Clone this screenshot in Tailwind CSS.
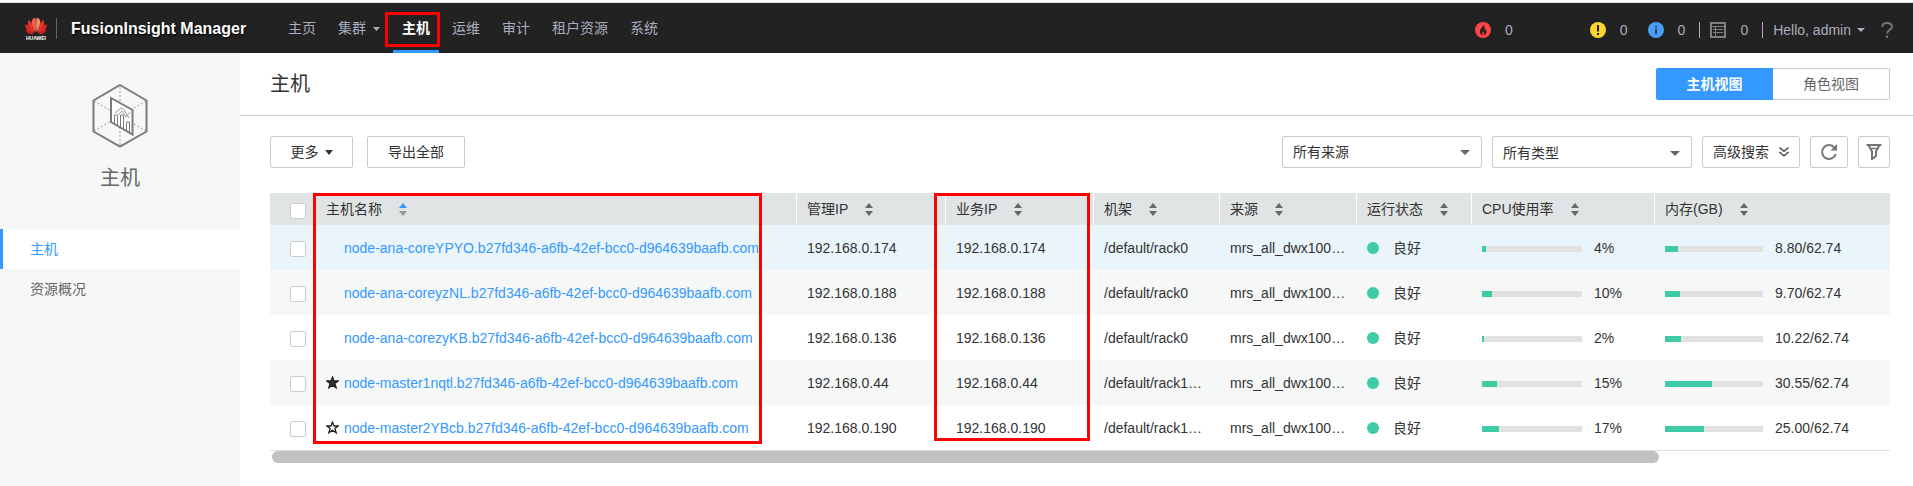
<!DOCTYPE html>
<html lang="zh-CN">
<head>
<meta charset="utf-8">
<title>FusionInsight Manager</title>
<script src="https://cdn.jsdelivr.net/npm/@tailwindcss/browser@4"></script>
</head>
<body class="flex min-h-screen flex-col bg-white pt-0.5 font-['Liberation_Sans','Noto_Sans_CJK_SC',sans-serif] text-sm leading-5 text-[#333333]">

<svg class="hidden">
  <symbol id="sort" viewBox="0 0 8 13"><path d="M4 0l4 5H0z"/><path d="M4 13l4-5H0z"/></symbol>
</svg>

<header class="flex h-[51px] shrink-0 items-start border-t border-[#dddddd] bg-[#222222] text-[#a9adbf]">
  <a href="#" class="flex items-center pt-[15px] pl-[25px]" aria-label="Huawei">
    <svg width="22" height="22" viewBox="0 0 44 44">
      <path fill="#f0664a" d="M21 28C14 20 11 9 15 3c1-2 3-3 6-3 1 9 1 19 0 28z"/>
      <path fill="#f58a66" d="M23 28c7-8 10-19 6-25-1-2-3-3-6-3-1 9-1 19 0 28z"/>
      <path fill="#e2362c" d="M19 29C9 23 3 14 7 4c6 4 11 13 12 25z"/>
      <path fill="#e2362c" d="M25 29c10-6 16-15 12-25-6 4-11 13-12 25z"/>
      <path fill="#d92b26" d="M18 30C7 29-1 22 1 12c8 3 13 9 17 18z"/>
      <path fill="#d92b26" d="M26 30c11-1 19-8 17-18-8 3-13 9-17 18z"/>
      <path fill="#cc1f1f" d="M17 32C10 34 4 31 1 23c7 1 12 4 16 9z"/>
      <path fill="#cc1f1f" d="M27 32c7 2 13-1 16-9-7 1-12 4-16 9z"/>
      <text x="22" y="44" text-anchor="middle" font-family="Liberation Sans" font-weight="bold" font-size="10" fill="#ffffff">HUAWEI</text>
    </svg>
  </a>
  <div class="mt-[15px] ml-[9px] h-[21px] w-px bg-[#666666]"></div>
  <div class="mt-3.5 ml-3.5 w-[208px] text-base leading-6 font-bold whitespace-nowrap text-white [text-shadow:1px_1px_2px_#000000]">FusionInsight Manager</div>
  <nav class="flex h-[50px] gap-1 whitespace-nowrap">
    <a href="#" class="px-[9px] pt-[15px]">主页</a>
    <a href="#" class="flex items-start gap-[7px] px-[9px] pt-[15px]">集群<svg class="mt-[9px]" width="7" height="4" viewBox="0 0 7 4" fill="currentColor"><path d="M0 0h7L3.500 4z"/></svg></a>
    <a href="#" class="relative border-b-3 border-[#3398ff] px-[9px] pt-[15px] font-bold text-white">主机<span class="absolute top-[9px] -left-2 h-[35px] w-[55px] border-3 border-[#ff0000]"></span></a>
    <a href="#" class="px-[9px] pt-[15px]">运维</a>
    <a href="#" class="px-[9px] pt-[15px]">审计</a>
    <a href="#" class="px-[9px] pt-[15px]">租户资源</a>
    <a href="#" class="px-[9px] pt-[15px]">系统</a>
  </nav>
  <div class="mt-[17px] mr-5 ml-auto flex items-center whitespace-nowrap">
    <svg width="16" height="16" viewBox="0 0 16 16"><circle cx="8" cy="8" r="8" fill="#ff4444"/><path d="M8.500 2.500c.5 2-3.500 3.500-3.500 7 0 2 1.200 3.500 2.700 4-.8-1.500-.4-2.800.6-4.200.3 1.200 1 1.700.6 3.900 2.500-1 3.300-3.700 2-6.200-.3.900-.7 1.300-1.200 1.500.4-2.500-.2-4.800-1.200-6z" fill="#222222"/></svg>
    <span class="ml-3.5">0</span>
    <svg class="ml-[77px]" width="16" height="16" viewBox="0 0 16 16"><circle cx="8" cy="8" r="8" fill="#fdd52b"/><path d="M7 3h2v6.500H7zM7 11h2v2H7z" fill="#222222"/></svg>
    <span class="ml-3.5">0</span>
    <svg class="ml-5" width="16" height="16" viewBox="0 0 16 16"><circle cx="8" cy="8" r="8" fill="#4a9cf5"/><path d="M7.300 4h1.400v1.500H7.300zM7.300 6.500h1.400V12H7.300z" fill="#222222"/></svg>
    <span class="ml-3.5">0</span>
    <span class="ml-3.5 h-4 w-px bg-[#a9adbf]"></span>
    <svg class="ml-2.5" width="16" height="16" viewBox="0 0 16 16" fill="none" stroke="#808080"><path stroke-width="2" d="M1 1h14v14H1z"/><path d="M1 4.500h14M3 7.500h10M3 10.500h10M5.500 4.500V14"/></svg>
    <span class="ml-3.5">0</span>
    <span class="ml-3.5 h-4 w-px bg-[#a9adbf]"></span>
    <a href="#" class="ml-2.5 flex items-center gap-1.5">Hello, admin<svg width="8" height="4" viewBox="0 0 8 4" fill="currentColor"><path d="M0 0h8L4 4z"/></svg></a>
    <a href="#" class="ml-4" aria-label="帮助"><svg width="12" height="16" viewBox="0 0 12 16" fill="none" stroke="#757575" stroke-width="2"><path d="M1.200 5C1 2.500 3 1 6 1s5 1.500 5 3.700c0 3-5 3.300-5 6.800"/><path d="M6 13.500V16"/></svg></a>
  </div>
</header>

<div class="flex grow">
  <aside class="w-60 shrink-0 bg-[#f6f8f8] text-[#666666]">
    <div class="flex h-44 flex-col items-center pt-[31px]">
      <svg width="56" height="64" viewBox="0 0 56 64" fill="none" stroke="#7a7a7a">
        <path stroke-width="2" d="M28 1l26.500 15.500v31L28 62.500 1.500 47.500v-31z"/>
        <path stroke="#999999" stroke-dasharray="2 2" d="M28 3v60M2 17l26 15M54 17L28 32M2 47l26-15M54 47L28 32"/>
        <path stroke-width="2" fill="#ffffff" d="M19 14l21.500 12v24.500L19 38z"/>
        <path d="M22.500 39v-8h3v10M28.500 43V31h3v14M34.500 47v-9h3v11"/>
        <path stroke="#999999" d="M23 29l6-5 3 2 5 8M25 32l5-5 4 6 4-5"/>
      </svg>
      <div class="mt-4 text-xl leading-7">主机</div>
    </div>
    <nav>
      <a href="#" class="block border-l-3 border-[#3398ff] bg-white py-2.5 pl-[27px] text-[#3398ff]">主机</a>
      <a href="#" class="block border-l-3 border-transparent py-2.5 pl-[27px]">资源概况</a>
    </nav>
  </aside>

  <main class="min-w-0 grow">
    <div class="flex h-[63px] items-center justify-between border-b border-[#cccccc] pr-[23px] pl-[30px]">
      <h1 class="text-xl leading-7">主机</h1>
      <div class="flex h-8">
        <button class="w-[117px] rounded-l-xs bg-[#3398ff] font-bold text-white">主机视图</button>
        <button class="w-[117px] rounded-r-xs border border-l-0 border-[#cccccc] text-[#666666]">角色视图</button>
      </div>
    </div>

    <div class="flex h-[52px] items-end pr-[23px] pl-[30px] whitespace-nowrap">
      <button class="flex h-8 w-[83px] items-center justify-center gap-1.5 rounded-xs border border-[#cccccc]">更多<svg width="8" height="5" viewBox="0 0 8 5" fill="#333333"><path d="M0 0h8L4 5z"/></svg></button>
      <button class="ml-3.5 h-8 w-[98px] rounded-xs border border-[#cccccc]">导出全部</button>
      <div class="ml-auto flex gap-2.5">
        <div class="relative">
          <select aria-label="来源" class="h-8 w-[200px] appearance-none rounded-xs border border-[#cccccc] pl-2.5"><option>所有来源</option></select>
          <svg class="pointer-events-none absolute top-3.5 right-3" width="10" height="5" viewBox="0 0 10 5" fill="#666666"><path d="M0 0h10L5 5z"/></svg>
        </div>
        <div class="relative">
          <select aria-label="类型" class="h-8 w-[200px] appearance-none rounded-xs border border-[#cccccc] pt-0.5 pl-2.5"><option>所有类型</option></select>
          <svg class="pointer-events-none absolute top-[15px] right-3" width="10" height="5" viewBox="0 0 10 5" fill="#666666"><path d="M0 0h10L5 5z"/></svg>
        </div>
        <button class="flex h-8 w-[98px] items-center justify-center gap-2.5 rounded-xs border border-[#cccccc]">高级搜索<svg width="10" height="10" viewBox="0 0 10 10" fill="none" stroke="#333333" stroke-width="1.200"><path d="M.5.5L5 4.500 9.500.5M.5 5L5 9l4.500-4"/></svg></button>
        <button aria-label="刷新" class="flex h-8 w-[38px] items-center justify-center rounded-xs border border-[#cccccc]"><svg width="18" height="18" viewBox="0 0 18 18" fill="none" stroke="#737373" stroke-width="2"><path d="M14.500 4.500A7 7 0 1 0 15.800 11"/><path fill="#737373" stroke="none" d="M17 1v6.500h-6.500z"/></svg></button>
        <button aria-label="筛选" class="flex h-8 w-8 items-center justify-center rounded-xs border border-[#cccccc]"><svg width="16" height="16" viewBox="0 0 16 16" fill="none" stroke="#737373" stroke-width="2"><path d="M.5 1h15M2.500 1l3.500 6.500V15l4-3V7.500L13.500 1"/><path stroke-width="1.500" d="M4 4.500h8"/></svg></button>
      </div>
    </div>

    <div class="relative mt-[25px] mr-[23px] ml-[30px]">
      <div class="border-b border-[#dddddd]">
        <table class="w-full table-fixed border-separate border-spacing-0 text-left whitespace-nowrap">
          <colgroup><col class="w-[46px]"><col class="w-[480px]"><col class="w-[149px]"><col class="w-[148px]"><col class="w-[126px]"><col class="w-[137px]"><col class="w-[115px]"><col class="w-[183px]"><col></colgroup>
          <thead>
            <tr id="head" class="h-8 bg-[#e0e4e4]">
              <th class="pt-1 pl-5"><input type="checkbox" aria-label="全选" class="block size-4 appearance-none rounded-xs border border-[#cccccc] bg-white"></th>
            </tr>
          </thead>
          <tbody id="rows"></tbody>
        </table>
      </div>
      <div class="ml-0.5 h-3 w-[1387px] max-w-full rounded-full bg-[#c1c1c1]"></div>
      <div class="pointer-events-none absolute top-0 left-[43px] h-[251px] w-[449px] border-3 border-[#ff0000]"></div>
      <div class="pointer-events-none absolute top-0 left-[664px] h-[248px] w-[156px] border-3 border-[#ff0000]"></div>
    </div>
  </main>
</div>

<script>
const heads = ['主机名称', '管理IP', '业务IP', '机架', '来源', '运行状态', 'CPU使用率', '内存(GB)'];
document.getElementById('head').insertAdjacentHTML('beforeend', heads.map((h, i) => `
  <th class="${i ? 'border-l border-white' : ''} pl-2.5 font-normal"><div class="flex items-center gap-[17px]">${h}
    ${i ? '<svg width="8" height="13" fill="#666666"><use href="#sort"/></svg>'
        : '<svg width="8" height="13" viewBox="0 0 8 13"><path fill="#3398ff" d="M4 0l4 5H0z"/><path fill="#999999" d="M4 13l4-5H0z"/></svg>'}
  </div></th>`).join(''));

const star = 'M6 1l1.400 3.600h3.900L8.200 6.900l1.200 4L6 8.600l-3.400 2.300 1.200-4L.7 4.600h3.900z';
const hosts = [
  ['node-ana-coreYPYO', '192.168.0.174', '/default/rack0', 4, '8.80', 13, ''],
  ['node-ana-coreyzNL', '192.168.0.188', '/default/rack0', 10, '9.70', 15, ''],
  ['node-ana-corezyKB', '192.168.0.136', '/default/rack0', 2, '10.22', 16, ''],
  ['node-master1nqtl', '192.168.0.44', '/default/rack1…', 15, '30.55', 48, '#333333'],
  ['node-master2YBcb', '192.168.0.190', '/default/rack1…', 17, '25.00', 40, 'none'],
];
document.getElementById('rows').innerHTML = hosts.map(([name, ip, rack, cpu, mem, pct, fill], i) => `
  <tr class="h-[45px] ${i === 0 ? 'bg-[#eaf5fb]' : i % 2 ? 'bg-[#f6f8f8]' : 'bg-white'}">
    <td class="pt-[3px] pl-5"><input type="checkbox" aria-label="${name}" class="block size-4 appearance-none rounded-xs border border-[#cccccc] bg-white"></td>
    <td class="pl-2.5"><div class="flex items-center"><span class="w-[18px]">${fill ? `<svg width="13" height="13" viewBox="0 0 12 12" fill="${fill}" stroke="#222222" stroke-width="1.200"><path d="${star}"/></svg>` : ''}</span><a href="#" class="text-[#3398ff]">${name}.b27fd346-a6fb-42ef-bcc0-d964639baafb.com</a></div></td>
    <td class="pl-[11px]">${ip}</td>
    <td class="pl-[11px]">${ip}</td>
    <td class="pl-[11px]">${rack}</td>
    <td class="pl-[11px]">mrs_all_dwx100…</td>
    <td class="pl-[11px]"><div class="flex items-center gap-3.5"><span class="size-3 rounded-full bg-[#3dcca6]"></span>良好</div></td>
    <td class="pl-[11px]"><div class="flex items-center gap-3"><div class="mt-0.5 h-1.5 w-[100px] bg-[#e1e1e1]"><div class="h-full bg-[#3dcca6]" style="width:${cpu}%"></div></div>${cpu}%</div></td>
    <td class="pl-[11px]"><div class="flex items-center gap-3"><div class="mt-0.5 h-1.5 w-[98px] bg-[#e1e1e1]"><div class="h-full bg-[#3dcca6]" style="width:${pct}%"></div></div>${mem}/62.74</div></td>
  </tr>`).join('');
</script>
</body>
</html>
